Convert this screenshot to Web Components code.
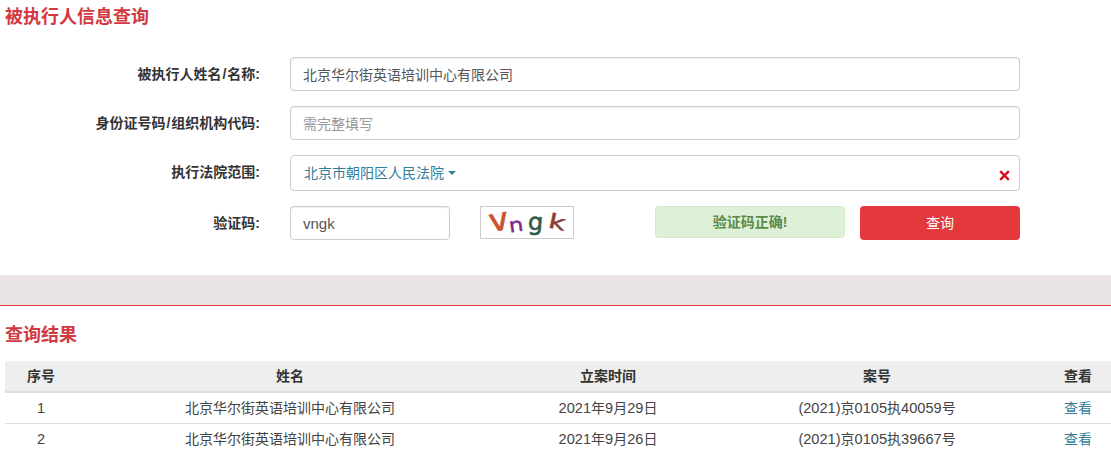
<!DOCTYPE html>
<html lang="zh-CN">
<head>
<meta charset="utf-8">
<title>被执行人信息查询</title>
<style>
  html, body { margin: 0; background: #fff; }
  body {
    font: 14px/20px "Liberation Sans", "Noto Sans CJK SC", sans-serif;
    color: #333;
  }
</style>
</head>
<body>
<zx-page>
  <zx-search-form slot="form"></zx-search-form>
  <zx-results slot="results"></zx-results>
</zx-page>

<script>
// the latin runs render a bit wider in the reference than the CJK around them
const wrapLatin = s => s.replace(/[0-9()]+/g, m => `<span class="n">${m}</span>`);

class ZxPage extends HTMLElement {
  constructor() {
    super();
    this.attachShadow({mode: "open"});
    this.shadowRoot.innerHTML = `
    <style>
      :host { display: block; width: 1111px; overflow: hidden; }
      .band { height: 30px; background: #ebe4e5; }
      .line { height: 1px; background: #e4393c; }
    </style>
    <slot name="form"></slot>
    <div class="band"></div>
    <div class="line"></div>
    <slot name="results"></slot>`;
  }
}

class ZxTitle extends HTMLElement {
  constructor() {
    super();
    this.attachShadow({mode: "open"});
    this.shadowRoot.innerHTML = `
    <style>
      :host { display: block; padding-left: 5px; font-size: 18px; line-height: 26px; font-weight: 700; color: #d13a42; }
    </style>
    <slot></slot>`;
  }
}

class ZxField extends HTMLElement {
  constructor() {
    super();
    this.attachShadow({mode: "open"});
    const label = this.getAttribute("label").replace("/", `<span class="slash">/</span>`);
    this.shadowRoot.innerHTML = `
    <style>
      :host { display: grid; grid-template-columns: 260px 730px; column-gap: 30px; align-items: start; }
      .label { text-align: right; font-weight: 700; color: #333; padding-top: 7px; }
      .slash { padding: 0 1px; }
    </style>
    <div class="label">${label}</div>
    <div class="body"><slot></slot></div>`;
  }
}

class ZxInput extends HTMLElement {
  constructor() {
    super();
    this.attachShadow({mode: "open"});
    this.shadowRoot.innerHTML = `
    <style>
      :host {
        display: flex; align-items: center; box-sizing: border-box; height: 34px;
        padding: 1px 12px 0; background: #fff; color: #555;
        border: 1px solid #ccc; border-radius: 4px;
        box-shadow: inset 0 1px 1px rgba(0,0,0,.075);
      }
      :host([placeholder]) { color: #999; }
      :host([latin]) { font-size: 15px; }
    </style>
    <slot></slot>`;
  }
}

class ZxCourtSelect extends HTMLElement {
  constructor() {
    super();
    this.attachShadow({mode: "open"});
    this.shadowRoot.innerHTML = `
    <style>
      :host {
        display: flex; box-sizing: border-box; height: 36px; padding: 7px 9px 0 13px;
        background: #fff; border: 1px solid #ccc; border-radius: 4px; color: #337e9b;
      }
      .value { display: flex; align-items: center; height: 20px; gap: 4px; flex: 1; }
      .caret { width: 0; height: 0; border-top: 4px solid #337e9b; border-left: 4px solid transparent; border-right: 4px solid transparent; }
      svg { display: block; margin-top: 7px; }
    </style>
    <div class="value"><slot></slot><span class="caret"></span></div>
    <svg width="11" height="11" viewBox="0 0 11 11" fill="none" stroke="#d5101c" stroke-width="2.4">
      <path d="M1.2 1.2 9.8 9.8M9.8 1.2 1.2 9.8"/>
    </svg>`;
  }
}

class ZxCaptcha extends HTMLElement {
  constructor() {
    super();
    this.attachShadow({mode: "open"});
    this.shadowRoot.innerHTML = `
    <style>
      :host {
        display: flex; box-sizing: border-box; width: 94px; height: 33px;
        justify-content: center; align-items: center; gap: 4px;
        border: 1px solid #ccc; background: #fff;
        font: 400 24px/1 "DejaVu Sans", sans-serif;
        -webkit-text-stroke: .6px;
      }
      span { display: block; }
      .a { color: #c9532c; transform: rotate(-10deg) translateY(-3px) scale(1.35,1.3); }
      .b { color: #7d2a8c; transform: rotate(-8deg) translate(-2px,2px) scale(.95,.8); }
      .c { color: #2f5a4c; transform: rotate(4deg) translate(-1px,-1px) scale(1,1); }
      .d { color: #8a3b34; transform: rotate(12deg) translate(2px,-1px) scale(1.2,.85); }
    </style>
    <span class="a">v</span><span class="b">n</span><span class="c">g</span><span class="d">k</span>`;
  }
}

class ZxSearchForm extends HTMLElement {
  constructor() {
    super();
    this.attachShadow({mode: "open"});
    this.shadowRoot.innerHTML = `
    <style>
      :host { display: block; padding: 4px 0 35px; }
      .rows { display: flex; flex-direction: column; gap: 15px; margin-top: 27px; }
      .verify { display: flex; align-items: flex-start; }
      .code { width: 160px; }
      zx-captcha { margin-left: 30px; }
      .ok {
        box-sizing: border-box; width: 190px; height: 32px; margin-left: 81px;
        display: flex; align-items: center; justify-content: center;
        background: #dff0d8; border: 1px solid #d6e9c6; border-radius: 4px;
        color: #5b8a4a; font-weight: 700;
      }
      .submit {
        width: 160px; height: 34px; margin-left: 15px; border-radius: 4px;
        display: flex; align-items: center; justify-content: center;
        background: #e4393c; color: #fff;
      }
    </style>
    <zx-title>被执行人信息查询</zx-title>
    <div class="rows">
      <zx-field label="被执行人姓名/名称:"><zx-input>北京华尔街英语培训中心有限公司</zx-input></zx-field>
      <zx-field label="身份证号码/组织机构代码:"><zx-input placeholder>需完整填写</zx-input></zx-field>
      <zx-field label="执行法院范围:"><zx-court-select>北京市朝阳区人民法院</zx-court-select></zx-field>
      <zx-field label="验证码:">
        <div class="verify">
          <zx-input class="code" latin>vngk</zx-input>
          <zx-captcha></zx-captcha>
          <div class="ok">验证码正确!</div>
          <div class="submit">查询</div>
        </div>
      </zx-field>
    </div>`;
  }
}

class ZxResults extends HTMLElement {
  constructor() {
    super();
    this.attachShadow({mode: "open"});
    const rows = [
      ["1", "北京华尔街英语培训中心有限公司", "2021年9月29日", "(2021)京0105执40059号"],
      ["2", "北京华尔街英语培训中心有限公司", "2021年9月26日", "(2021)京0105执39667号"]
    ];
    this.shadowRoot.innerHTML = `
    <style>
      :host { display: block; padding: 16px 0 0; }
      table { width: 1106px; margin: 13px 0 0 5px; border-collapse: collapse; table-layout: fixed; }
      th, td { padding: 0; text-align: center; vertical-align: middle; }
      th { height: 30px; background: #eee; border-bottom: 2px solid #ddd; color: #333; }
      td { height: 30px; color: #444; border-bottom: 1px solid #ddd; }
      tr:last-child td { border-bottom: 0; }
      a { color: #337e9b; text-decoration: none; }
      .view { padding-left: 4px; }
      .n { font-size: 14.6px; }
    </style>
    <zx-title>查询结果</zx-title>
    <table>
      <colgroup><col style="width:72px"><col style="width:426px"><col style="width:210px"><col style="width:328px"><col style="width:70px"></colgroup>
      <thead><tr><th>序号</th><th>姓名</th><th>立案时间</th><th>案号</th><th class="view">查看</th></tr></thead>
      <tbody>
        ${rows.map(r => `<tr>${r.map(c => `<td>${wrapLatin(c)}</td>`).join("")}<td class="view"><a href="#">查看</a></td></tr>`).join("")}
      </tbody>
    </table>`;
  }
}

customElements.define("zx-page", ZxPage);
customElements.define("zx-title", ZxTitle);
customElements.define("zx-field", ZxField);
customElements.define("zx-input", ZxInput);
customElements.define("zx-court-select", ZxCourtSelect);
customElements.define("zx-captcha", ZxCaptcha);
customElements.define("zx-search-form", ZxSearchForm);
customElements.define("zx-results", ZxResults);
</script>
</body>
</html>
